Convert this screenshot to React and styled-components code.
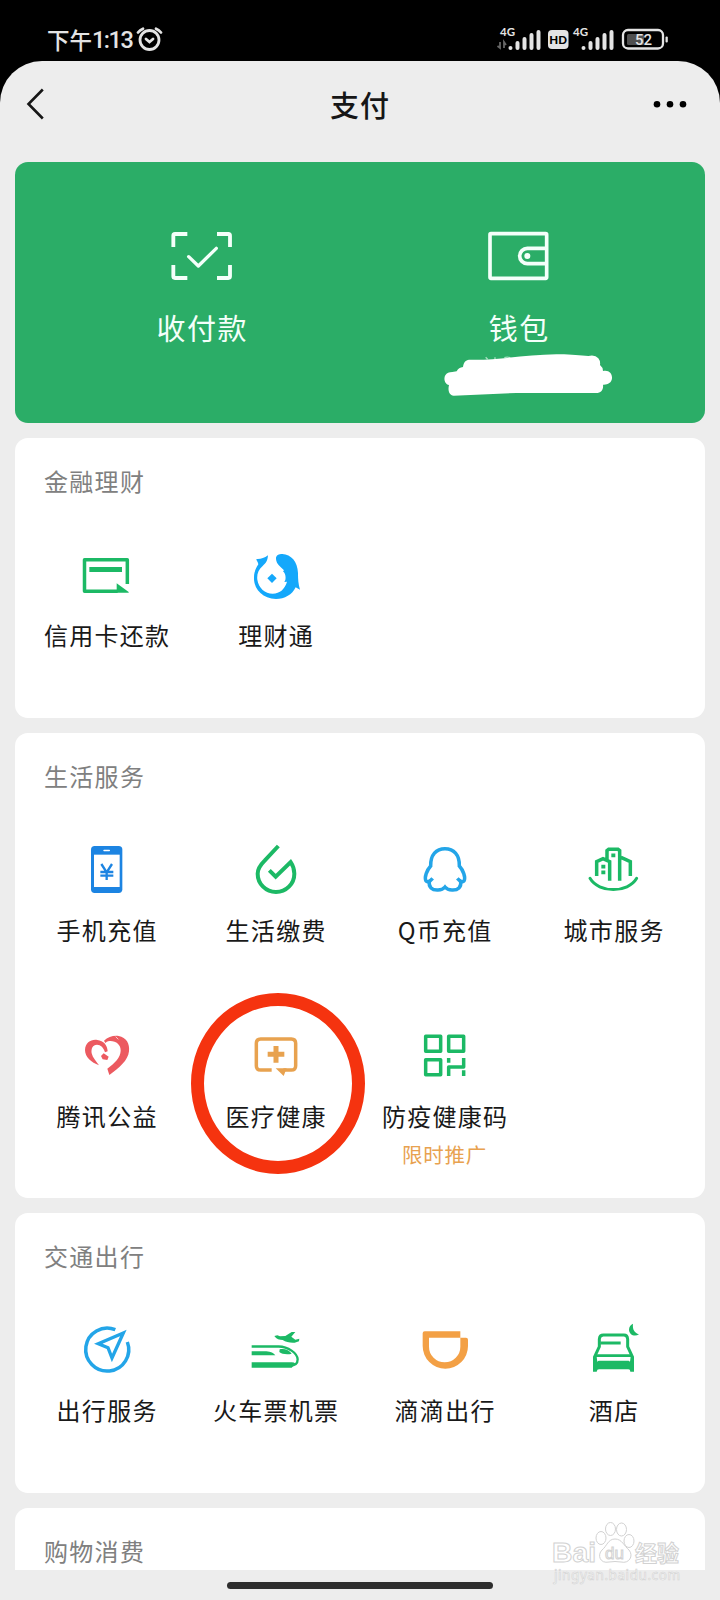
import React from "react";
import styled, { createGlobalStyle } from "styled-components";

const GREEN = "#1cb965";
const BLUE = "#23a5e8";
const ORANGE = "#e8a24f";

const GlobalStyle = createGlobalStyle`
  * {
    box-sizing: border-box;
  }
  body {
    margin: 0;
    background: #000;
    font-family: "Noto Sans CJK SC", "Noto Sans", sans-serif;
  }
`

const Screen = styled.div`
  width: 720px;
  height: 1600px;
  overflow: hidden;
  display: flex;
  flex-direction: column;
  background: #000;
`

const StatusBar = styled.div`
  height: 61px;
  flex: none;
  display: flex;
  justify-content: space-between;
  padding: 20px 50px 0 47px;
`

const Clock = styled.div`
  display: flex;
  align-items: center;
  height: 38px;
  color: #e4e4e4;
  font-size: 22.5px;
  font-weight: 500;
  svg {
    margin: 0 0 0 4px;
  }
`

const Digits = styled.span`
  font-family: Roboto, sans-serif;
  font-size: 23.5px;
  letter-spacing: -1.5px;
  padding-top: 1px;
`

const Sheet = styled.main`
  flex: 1;
  display: flex;
  flex-direction: column;
  background: #ededed;
  border-radius: 42px 42px 0 0;
  overflow: hidden;
`

const NavBar = styled.header`
  height: 101px;
  flex: none;
  display: flex;
  align-items: flex-start;
  justify-content: space-between;
  padding: 24px 30px 0 24px;
`

const PageTitle = styled.h1`
  margin: -1px 0 0;
  padding-left: 22px;
  font-size: 29px;
  font-weight: 500;
  line-height: 40px;
  letter-spacing: 1px;
  color: #161616;
`

const Cards = styled.div`
  display: flex;
  flex-direction: column;
  gap: 15px;
  padding: 0 15px;
  height: 1408.5px;
  overflow: hidden;
`

const PayCard = styled.section`
  flex: none;
  height: 261px;
  display: flex;
  padding: 67px 28px 0;
  border-radius: 13px;
  background: #2bad67;
`

const PayItem = styled.div`
  position: relative;
  flex: 1;
  display: flex;
  flex-direction: column;
  align-items: center;
`

const PayLabel = styled.span`
  margin-top: 24px;
  font-size: 29px;
  line-height: 40px;
  letter-spacing: 1.6px;
  text-indent: 1.6px;
  color: #f4fffa;
`

/* covers the wallet balance */
const Scribble = styled.svg`
  position: absolute;
  left: 83px;
  top: 124px;
`

const Card = styled.section`
  flex: none;
  padding: 0 7px;
  border-radius: 13px;
  background: #fff;
`

const CardTitle = styled.h2`
  margin: 0;
  height: 94px;
  padding: 27px 0 0 22px;
  font-size: 24px;
  font-weight: 400;
  line-height: 32px;
  letter-spacing: 1.3px;
  color: #808080;
`

const Grid = styled.div`
  display: grid;
  grid-template-columns: repeat(4, 169px);
  grid-auto-rows: 185.8px;
`

const Item = styled.div`
  position: relative;
  display: flex;
  flex-direction: column;
  align-items: center;
  padding-top: 13px;
`

const Label = styled.span`
  margin-top: 14px;
  font-size: 24px;
  line-height: 32px;
  letter-spacing: 1.3px;
  text-indent: 1.3px;
  white-space: nowrap;
  color: #191919;
`

const Note = styled.span`
  margin-top: 8px;
  font-size: 20.5px;
  line-height: 28px;
  letter-spacing: 0.8px;
  color: ${ORANGE};
`

const Ring = styled.div`
  position: absolute;
  left: 0;
  top: -20px;
  width: 174px;
  height: 181px;
  border: 13.5px solid #f5330f;
  border-radius: 50%;
`

const HomeArea = styled.footer`
  flex: none;
  height: 30px;
  display: flex;
  justify-content: center;
  padding-top: 12px;
`

const HomeBar = styled.div`
  width: 266px;
  height: 7px;
  border-radius: 4px;
  background: #2e2e2e;
`

const Watermark = styled.svg`
  position: absolute;
  left: 545px;
  top: 1515px;
`

const Icon = ({ children, color }) => (
  <svg width="60" height="60" viewBox="0 0 180 180" fill="none" stroke={color} strokeWidth="10.5">
    {children}
  </svg>
)

const CreditCard = () => (
  <Icon color={GREEN}>
    <path d="M151 117V44H22.500V138.500H122" strokeLinejoin="round" />
    <path d="M37 73.500H135" strokeWidth="15" />
    <path d="M119 143V115L155 141V143Z" fill={GREEN} stroke="none" />
  </Icon>
)

const Fish = () => (
  <Icon color="none">
    <path
      fill="#14a8fb"
      d="M66 31C65 47 60 54 50 63C37 74 32 88 34 104C38 129 57 146 80 146C102 146 117 131 123 110L115 111L118 105C120 94 118 86 111 79L114 76C104 66 91 57 90 42C89 31 98 27 109 27C135 28 155 50 156 84C156 104 157 116 162 134L149 127C139 149 116 162 90 162C49 160 22 131 24 96C24 80 31 67 37 58C36 50 32 49 31 42C43 43 54 40 66 31Z"
    />
    <path fill="#14a8fb" d="M78 86L92 100L78 114L64 100Z" />
  </Icon>
)

const Phone = () => (
  <Icon color="none">
    <rect x="42" y="18" width="94" height="141" rx="11" fill="#1c84e2" />
    <rect x="51" y="44" width="77" height="97" fill="#fff" />
    <rect x="79" y="29" width="20" height="4.500" rx="2" fill="#fff" />
    <path d="M73 72L89 97L105 72M89 95V120M70 96H109M70 107H109" stroke="#1c84e2" strokeWidth="7" />
  </Icon>
)

const Drop = () => (
  <Icon color={GREEN}>
    <path strokeWidth="12" d="M97 18L56 62C42 76 35 86 35 101A55 55 0 0 0 145 101C145 87 140 75 134 66L89 110L70 91" />
  </Icon>
)

const Penguin = () => (
  <Icon color={BLUE}>
    <path d="M53 115C46 123 37 128 33 123C27 112 36 90 47 78C46 44 64 26 90 26C116 26 134 44 133 78C144 90 153 112 147 123C143 128 134 123 127 115" />
    <path d="M43 123C40 142 51 151 69 150C79 150 86 146 90 141C94 146 101 150 111 150C129 151 140 142 137 123" />
  </Icon>
)

const City = () => (
  <Icon color={GREEN}>
    <path d="M69 58V32L74 28H102L107 32V122M38 108V65L57 56L77 65V122M111 52L139 65V108" />
    <path d="M18 115C44 160 132 160 158 115" strokeLinecap="round" strokeWidth="9" />
    <path d="M82 46H94M52 80H64M52 97H64" strokeWidth="11" />
  </Icon>
)

const Heart = () => (
  <Icon color="none">
    <path fill="#ec5a60" d="M66 118C43 109 24 93 24 72C25 49 43 39 61 42C80 44 91 57 92 76L84 79C80 65 71 56 60 56C47 56 42 68 44 82C47 95 57 106 66 118Z" />
    <path fill="#ec5a60" d="M81 44C93 32 110 28 125 30C148 34 159 53 156 76C153 104 127 125 97 147L91 128C114 110 130 95 131 74C132 57 117 44 98 45C91 46 87 49 85 51Z" />
    <path fill="#ec5a60" d="M72 90L80 82L95 92L91 102L77 100Z" />
    <path stroke="#fff" strokeWidth="2" d="M116 32L124 40" />
  </Icon>
)

const Medical = () => (
  <Icon color={ORANGE}>
    <path d="M77 132H44Q31 132 31 119V52Q31 39 44 39H136Q149 39 149 52V119Q149 132 136 132H112" />
    <path d="M89 127H122L113 150Z" fill={ORANGE} stroke="none" />
    <path d="M65 85H115M90 60V110" strokeWidth="15" />
  </Icon>
)

const QrCode = () => (
  <Icon color={GREEN}>
    <g strokeLinejoin="round">
      <rect x="32" y="31" width="45" height="45" />
      <rect x="101" y="31" width="45" height="45" />
      <rect x="32" y="101" width="45" height="45" />
      <path d="M101 150V123H146V96M101 96V110M146 133V150" />
    </g>
  </Icon>
)

const Compass = () => (
  <Icon color={BLUE}>
    <path d="M115 29A64.500 64.500 0 1 0 151 66" />
    <path d="M139 39L64 71L93 83L105 114Z" strokeWidth="10" />
  </Icon>
)

const Train = () => (
  <Icon color={GREEN}>
    <path d="M17 79.500H98C126 80 154 99 155 118C155 130 147 137 132 137" strokeWidth="7" />
    <path fill={GREEN} stroke="none" d="M17 94H61C75 95 83 99 88 106H17ZM17 127H137Q145 127 148 131L137 143H17ZM101 88C114 84 130 90 137 101C126 104 107 103 100 96Z" />
    <path fill={GREEN} stroke="none" d="M85 48L94 46L102 49L118 48L137 36H148L136 50L148 59L160 56L159 64L146 68C132 69 120 66 110 60C101 60 91 57 85 48Z" />
  </Icon>
)

const Cup = () => (
  <Icon color="none">
    <path
      fill="#f3a045"
      fillRule="evenodd"
      d="M23 40Q23 34 29 34H136V53H153Q159 53 159 59V78A68 68 0 0 1 23 78ZM42 53V80A47 47 0 0 0 136 80V53Z"
    />
  </Icon>
)

const Hotel = () => (
  <Icon color={GREEN}>
    <path d="M31 112L46 80V57Q47 45 58 45H120Q130 45 131 57V80L146 112" strokeWidth="9" />
    <path d="M49 69H110" strokeWidth="9" />
    <path d="M33 107H144" strokeWidth="8" />
    <path fill={GREEN} stroke="none" d="M27 110H38L40 125L44 122H134L138 125L140 110H150V155H139Q139 148 133 148H45Q39 148 38 155H27Z" />
    <path fill={GREEN} stroke="none" d="M147 11C145 28 151 38 165 43C151 52 135 43 135 29C135 20 140 14 147 11Z" />
  </Icon>
)

const Bars = ({ x }) => (
  <g stroke="#e4e4e4" strokeWidth="4" strokeLinecap="round">
    <path d={`M${x} 48V48M${x + 7} 48V43M${x + 14} 48V39M${x + 21} 48V35M${x + 28} 48V32`} />
  </g>
)

const StatusIcons = () => (
  <svg width="176" height="40" viewBox="495 20 176 40" fill="#e4e4e4" fontFamily="Lato, sans-serif">
    <path d="M501 42V48L498.500 46M505 48V42L507 45" fill="none" stroke="#666" strokeWidth="1.800" />
    <text x="501" y="36" fontSize="11.500" fontWeight="700">4G</text>
    <Bars x={511.5} />
    <rect x="549" y="30" width="20.500" height="19" rx="4" />
    <text x="559.2" y="43.500" fontSize="11.500" fontWeight="900" textAnchor="middle" fill="#000">HD</text>
    <text x="574" y="36" fontSize="11.500" fontWeight="700">4G</text>
    <Bars x={584.5} />
    <rect x="624" y="30" width="40" height="18.500" rx="5" fill="none" stroke="#e4e4e4" strokeWidth="2.300" />
    <rect x="628" y="34" width="17" height="11" rx="1.500" fill="#505050" />
    <text x="644.5" y="45" fontSize="15" fontWeight="500" fontFamily="Roboto" textAnchor="middle">52</text>
    <rect x="666.5" y="36.500" width="2.300" height="6" rx="1" />
  </svg>
)

const AlarmIcon = () => (
  <svg width="27" height="26" viewBox="0 0 27 26" fill="none" stroke="#e4e4e4" strokeWidth="2.800" strokeLinecap="round">
    <circle cx="13.500" cy="14" r="9.500" />
    <path d="M10 13L13.500 16L17 13" />
    <path d="M2 6.500Q4 4 7 2.700M25 6.500Q23 4 20 2.700" />
  </svg>
)

const sections = [
  {
    title: "金融理财",
    items: [
      { label: "信用卡还款", icon: CreditCard },
      { label: "理财通", icon: Fish },
    ],
  },
  {
    title: "生活服务",
    items: [
      { label: "手机充值", icon: Phone },
      { label: "生活缴费", icon: Drop },
      { label: "Q币充值", icon: Penguin },
      { label: "城市服务", icon: City },
      { label: "腾讯公益", icon: Heart },
      { label: "医疗健康", icon: Medical, ring: true },
      { label: "防疫健康码", icon: QrCode, note: "限时推广" },
    ],
  },
  {
    title: "交通出行",
    items: [
      { label: "出行服务", icon: Compass },
      { label: "火车票机票", icon: Train },
      { label: "滴滴出行", icon: Cup },
      { label: "酒店", icon: Hotel },
    ],
  },
  { title: "购物消费", items: [] },
]

const Section = ({ title, items }) => (
  <Card>
    <CardTitle>{title}</CardTitle>
    <Grid>
      {items.map(({ label, icon: ItemIcon, note, ring }) => (
        <Item key={label}>
          <ItemIcon />
          <Label>{label}</Label>
          {note && <Note>{note}</Note>}
          {ring && <Ring />}
        </Item>
      ))}
    </Grid>
  </Card>
)

const App = () => {
  return (
    <>
      <GlobalStyle />
      <Screen>
        <StatusBar>
          <Clock>
            下午<Digits>1:13</Digits>
            <AlarmIcon />
          </Clock>
          <StatusIcons />
        </StatusBar>
        <Sheet>
          <NavBar>
            <svg width="24" height="40" viewBox="0 0 24 40" fill="none" stroke="#161616" strokeWidth="2.600">
              <path d="M18.800 4.500L4.500 19L18.800 33.500" />
            </svg>
            <PageTitle>支付</PageTitle>
            <svg width="40" height="40" viewBox="0 0 40 40" fill="#000">
              <circle cx="7" cy="19.300" r="3.300" />
              <circle cx="20" cy="19.300" r="3.300" />
              <circle cx="33" cy="19.300" r="3.300" />
            </svg>
          </NavBar>
          <Cards>
            <PayCard>
              <PayItem>
                <svg width="66" height="54" viewBox="0 0 198 162" fill="none" stroke="#f4fffa" strokeWidth="11.500">
                  <path d="M13 54V20Q13 15 18 15H55M144 15H178Q183 15 183 20V54M183 108V142Q183 147 178 147H144M55 147H18Q13 147 13 142V108" />
                  <path d="M59 83L88 111L142 58" strokeWidth="10" strokeLinecap="round" strokeLinejoin="round" />
                </svg>
                <PayLabel>收付款</PayLabel>
              </PayItem>
              <PayItem>
                <svg width="66" height="54" viewBox="0 0 198 162" fill="none" stroke="#f4fffa" strokeWidth="11">
                  <rect x="12" y="14" width="170" height="134" rx="3" />
                  <path d="M183 58H124A23 23 0 0 0 124 104H183" />
                  <circle cx="124" cy="81" r="9" fill="#f4fffa" stroke="none" />
                </svg>
                <PayLabel>钱包</PayLabel>
                <Scribble width="170" height="44" viewBox="0 0 510 132">
                  <path d="M128 13L134 19M156 13V19M184 14Q194 10 202 15" stroke="#a5dfc0" strokeWidth="4" fill="none" />
                  <path
                    fill="#fff"
                    d="M78 20C160 23 250 5 340 4C380 3 410 8 436 9Q456 4 466 16Q473 25 471 36Q480 43 480 54C498 50 508 62 507 76C506 90 493 96 480 95C482 110 474 120 460 120H220L32 128C18 127 14 112 18 96C5 94 1 76 7 67Q13 57 28 57L41 55Q47 43 60 42C62 28 68 21 78 20Z"
                  />
                </Scribble>
              </PayItem>
            </PayCard>
            {sections.map((section) => (
              <Section key={section.title} {...section} />
            ))}
          </Cards>
          <HomeArea>
            <HomeBar />
          </HomeArea>
        </Sheet>
      </Screen>
      <Watermark width="145" height="70" viewBox="0 0 145 70" fill="#fff" stroke="#d2d2d2" strokeWidth="1">
        <ellipse cx="56" cy="23" rx="5" ry="6.500" />
        <ellipse cx="65.500" cy="14" rx="5" ry="6.500" />
        <ellipse cx="76.500" cy="14.500" rx="5" ry="6.500" />
        <ellipse cx="84" cy="26" rx="5" ry="6.500" />
        <path d="M70 24C77 24 79 31 84 35C89 41 84 49 76 47Q70 46 64 47C55 49 52 40 57 35C62 31 63 24 70 24Z" />
        <text x="7" y="46.500" fontFamily="Liberation Sans" fontWeight="700" fontSize="27" textLength="44" lengthAdjust="spacingAndGlyphs">Bai</text>
        <text x="60" y="44" fontFamily="Liberation Sans" fontSize="17" textLength="19">du</text>
        <text x="90" y="45.500" fontFamily="Noto Sans CJK SC" fontWeight="700" fontSize="22" textLength="44">经验</text>
        <text x="9" y="65" fontFamily="Noto Sans" fontSize="13.500" strokeWidth="0.600" textLength="126">jingyan.baidu.com</text>
      </Watermark>
    </>
  )
}

export default App;
